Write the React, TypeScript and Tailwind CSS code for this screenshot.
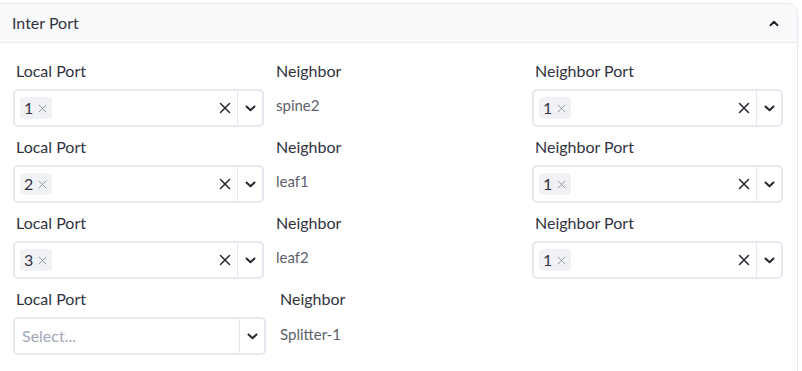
import React from "react";

const font = { fontFamily: '"Source Sans Pro", Lato, "Liberation Sans", sans-serif' };

function XIcon({ size = 12, className = "", w = 1.5 }: { size?: number; className?: string; w?: number }) {
  return (
    <svg width={size} height={size} viewBox="0 0 12 12" className={className} fill="none">
      <path d="M1.5 1.5 L10.5 10.5 M10.5 1.5 L1.5 10.5" stroke="currentColor" strokeWidth={w} strokeLinecap="round" />
    </svg>
  );
}

function ChevronDown() {
  return (
    <svg width="11" height="7" viewBox="0 0 11 7" fill="none">
      <path d="M1.5 1.5 L5.5 5.3 L9.5 1.5" stroke="#262730" strokeWidth="2" strokeLinecap="round" strokeLinejoin="round" />
    </svg>
  );
}

function MultiSelect({ value }: { value?: string }) {
  return (
    <div className="flex h-[38px] items-stretch rounded-[5px] border-2 border-[#e6e9ef] bg-white">
      <div className="flex flex-1 items-center pl-[5px]">
        {value ? (
          <span className="flex h-[22px] items-center gap-[3px] rounded-[4px] bg-[#f0f2f6] pl-[4px] pr-[5px] text-[16px] text-[#31333f]">
            {value}
            <XIcon size={9} w={1.2} className="text-[#8b8e99] ml-[2px]" />
          </span>
        ) : (
          <span className="pl-[2px] text-[16px] text-[#a3a8b8]">Select...</span>
        )}
      </div>
      {value && (
        <div className="flex w-[24px] items-center justify-center text-[#262730]">
          <XIcon size={12} />
        </div>
      )}
      <div className="w-px bg-[#e6e9ef]" />
      <div className="flex w-[24px] items-center justify-center">
        <ChevronDown />
      </div>
    </div>
  );
}

function Label({ children, pad = true }: { children: React.ReactNode; pad?: boolean }) {
  return (
    <div className={`mb-[6px] h-[24px] text-[16px] leading-[24px] text-[#31333f] ${pad ? "pl-[3px]" : ""}`}>
      {children}
    </div>
  );
}

const rows = [
  { local: "1", neighbor: "spine2", nport: "1" },
  { local: "2", neighbor: "leaf1", nport: "1" },
  { local: "3", neighbor: "leaf2", nport: "1" },
];

export default function App() {
  return (
    <div className="h-[371px] w-[802px] overflow-hidden bg-white pt-[3px]" style={font}>
      <div className="-ml-px w-[799px] rounded-tr-[10px] border border-[#e6e9ef]">
        <div className="flex h-[39px] items-center justify-between rounded-tr-[10px] border-b border-[#e6e9ef] bg-[#f9fafb] pl-[12px] pr-[18px]">
          <span className="text-[16px] text-[#31333f]">Inter Port</span>
          <svg width="10" height="7" viewBox="0 0 10 7" fill="none">
            <path d="M1.5 5.3 L5 1.8 L8.5 5.3" stroke="#262730" strokeWidth="2" strokeLinecap="round" strokeLinejoin="round" />
          </svg>
        </div>
        <div className="flex flex-col gap-[8px] pl-[13px] pr-[14px] pt-[16px] pb-[20px]">
          {rows.map((r, i) => (
            <div key={i} className="grid grid-cols-[251px_1fr_251px] gap-x-[10px]">
              <div>
                <Label>Local Port</Label>
                <MultiSelect value={r.local} />
              </div>
              <div className="pl-[2px]">
                <Label pad={false}>Neighbor</Label>
                <div className="pt-[6px] text-[15px] leading-[20px] text-[#5c5f6b]">{r.neighbor}</div>
              </div>
              <div>
                <Label>Neighbor Port</Label>
                <MultiSelect value={r.nport} />
              </div>
            </div>
          ))}
          <div className="grid grid-cols-[253px_1fr] gap-x-[12px]">
            <div>
              <Label>Local Port</Label>
              <MultiSelect />
            </div>
            <div className="pl-[2px]">
              <Label pad={false}>Neighbor</Label>
              <div className="pt-[7px] text-[15px] leading-[20px] text-[#5c5f6b]">Splitter-1</div>
            </div>
          </div>
        </div>
      </div>
    </div>
  );
}
